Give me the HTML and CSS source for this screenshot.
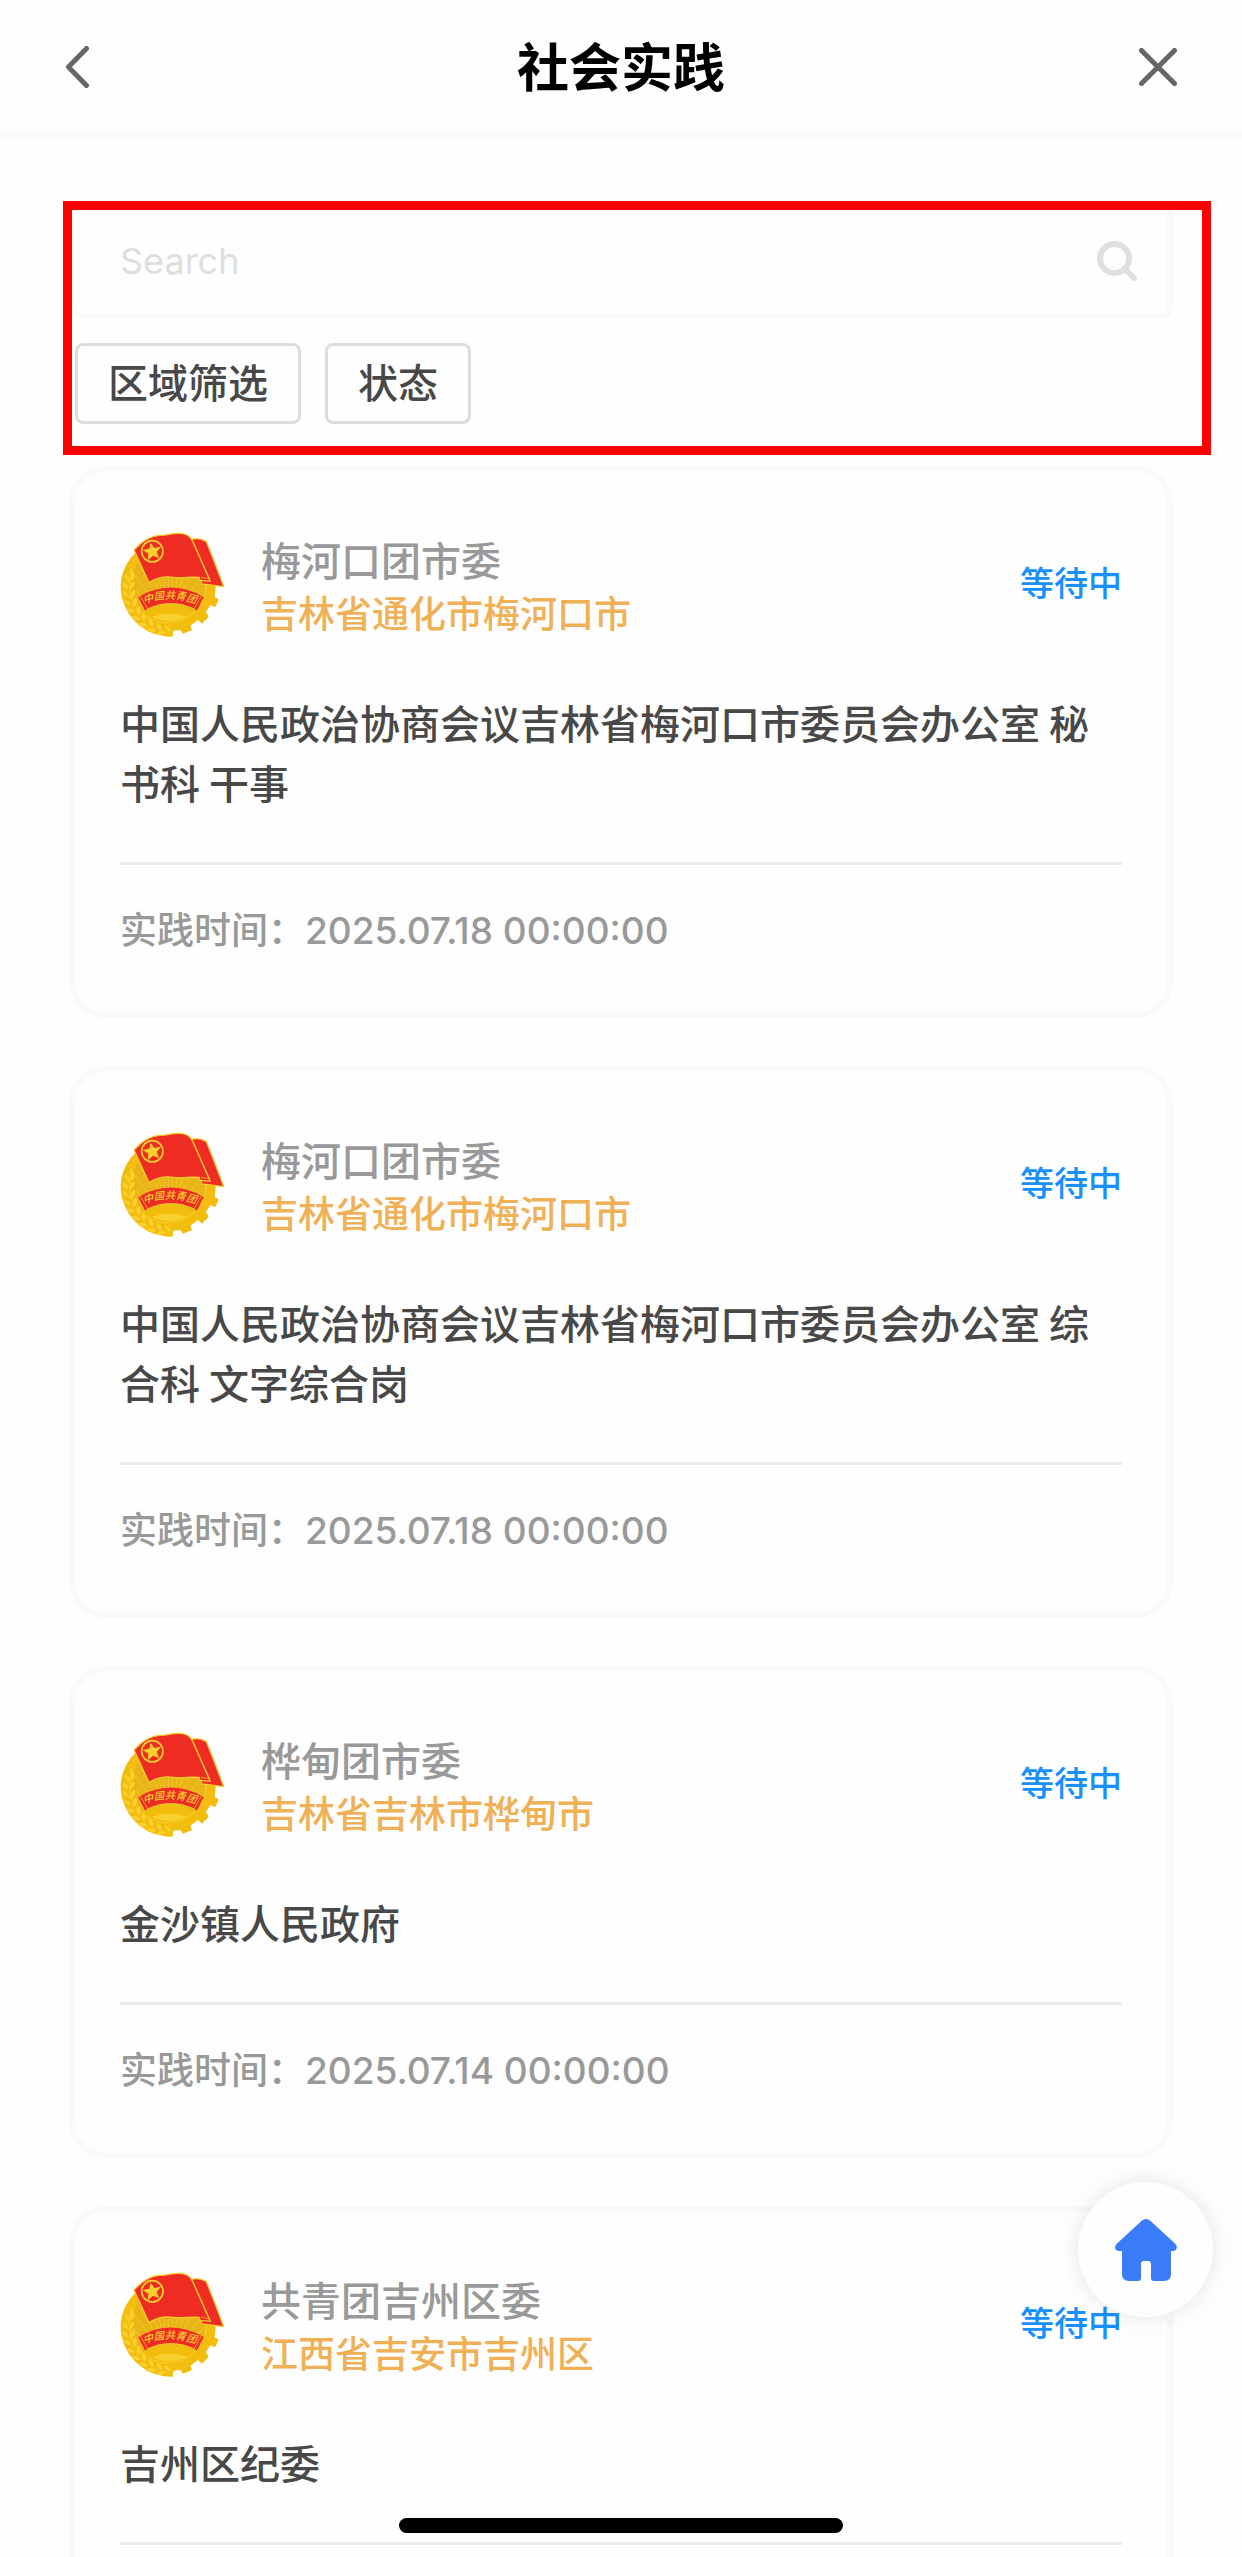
FILE: index.html
```html
<!DOCTYPE html>
<html lang="zh-CN">
<head>
  <meta charset="UTF-8" />
  <meta name="viewport" content="width=device-width, initial-scale=1.0"/>
  <title>社会实践</title>
  <link rel="stylesheet" href="styles.css">
</head>
<body>
  <!-- Header -->
  <header class="topbar">
    <button class="icon-btn" type="button" aria-label="返回">
      <svg width="24" height="42" viewBox="0 0 24 42"><path d="M21.500 2.500L3.500 21L21.500 39.500"/></svg>
    </button>
    <h1>社会实践</h1>
    <button class="icon-btn" type="button" aria-label="关闭">
      <svg width="38" height="38" viewBox="0 0 38 38"><path d="M2.500 2.500L35.500 35.500M35.500 2.500L2.500 35.500"/></svg>
    </button>
  </header>

  <main class="content">
    <!-- Search and filters -->
    <section class="filter-panel">
      <form class="search-box">
        <input type="text" placeholder="Search" aria-label="Search">
        <button class="search-btn" type="submit" aria-label="搜索">
          <svg width="40" height="40" viewBox="0 0 40 40"><circle cx="17.500" cy="17.500" r="14.500"/><path d="M29 29L37 37"/></svg>
        </button>
      </form>
      <div class="filters">
        <button type="button">区域筛选</button>
        <button type="button">状态</button>
      </div>
    </section>

    <!-- Job list -->
    <section class="list">
      <article class="card">
        <div class="card-head">
          <!-- The emblem is drawn once here, the other cards reuse it -->
          <svg class="avatar" viewBox="60 66 315 315" role="img" aria-label="团徽">
            <g id="emblem">
              <!-- gear -->
              <path fill="#f2bd0c" d="M204 88A144 144 0 0 0 62 228A152 152 0 0 0 218 380L220 362L242 360L248 371L276 360L271 347L294 330L306 341L326 320L318 306L331 286L346 291L356 268L344 262L347 232Z"/>
              <circle cx="205" cy="225" r="113" fill="#e8b416"/>
              <path stroke="#f6cc3a" stroke-width="2" d="M205 330L98 190M205 330L92 230M205 330L118 160M205 330L138 140M205 330L160 130M205 330L182 120M205 330L205 120M205 330L228 120M205 330L250 130M205 330L272 140M205 330L292 160M205 330L312 190M205 330L318 230"/>
              <path fill="#f2bd0c" d="M142 303Q210 266 280 303L294 305Q265 338 205 338Q145 338 116 305Z"/>
              <path fill="#fad02f" d="M156 321Q210 302 262 321Q210 346 156 321Z"/>
              <path fill="none" stroke="#fad02f" stroke-width="3" d="M98 178A116 116 0 0 0 205 339A116 116 0 0 0 319 225"/>
              <!-- wheat -->
              <g fill="#fad02f">
                <path d="M92 174q12 10 8 28q-16 -8 -8 -28zM76 192q14 8 13 24q-17 -6 -13 -24zM104 188q2 16 -12 26q-4 -16 12 -26z"/>
                <path d="M69 216q16 6 17 22q-18 -4 -17 -22zM103 212q3 18 -13 28q-6 -18 13 -28z"/>
                <path d="M66 242q18 4 21 20q-19 -2 -21 -20zM104 238q5 17 -11 29q-8 -18 11 -29z"/>
                <path d="M70 268q18 2 24 18q-20 0 -24 -18zM108 262q8 17 -6 30q-11 -16 6 -30z"/>
                <path d="M78 294q19 -1 28 14q-21 3 -28 -14zM117 286q10 14 -1 30q-14 -14 1 -30z"/>
                <path d="M92 319q19 -5 31 9q-21 7 -31 -9zM130 306q13 13 5 29q-17 -11 -5 -29z"/>
                <path d="M112 342q18 -9 32 3q-18 12 -32 -3zM149 324q15 11 9 27q-18 -8 -9 -27z"/>
                <path d="M136 360q17 -12 34 -1q-17 15 -34 1zM172 338q16 9 13 23q-19 -5 -13 -23z"/>
                <path d="M168 371q15 -13 30 -4q-12 14 -30 4zM193 346q17 4 20 18q-18 0 -20 -18z"/>
              </g>
              <!-- flag -->
              <path fill="#ee2c24" stroke="#f7ca2e" stroke-width="4" stroke-linejoin="round" d="M276 88Q298 82 318 94Q330 120 371 230L306 222L298 200Z"/>
              <path fill="#ee2c24" stroke="#f7ca2e" stroke-width="4" stroke-linejoin="round" d="M102 120Q140 78 178 76C204 78 228 62 258 74Q270 78 278 94L331 214L300 211L297 202C266 200 244 206 220 202Q180 196 147 218Z"/>
              <path fill="none" stroke="#f7ca2e" stroke-width="2" d="M278 94L327 206L303 202"/>
              <circle cx="157" cy="124" r="32" fill="none" stroke="#fad02f" stroke-width="5"/>
              <path fill="#fad02f" d="M152 98L163 114L183 110L170 126L178 145L159 137L143 151L145 131L128 120L148 116Z"/>
              <!-- ribbon -->
              <path fill="#ee2c24" stroke="#fad02f" stroke-width="2" d="M113 261Q210 202 313 260L291 304L282 296Q212 264 143 296L135 304Z"/>
              <path fill="none" stroke="#fad02f" stroke-width="2" d="M121 258L143 296M304 258L282 296"/>
              <g class="emblem-text">
                <text transform="translate(147 277) rotate(-14)">中</text>
                <text transform="translate(178 269) rotate(-7)">国</text>
                <text transform="translate(210 266)">共</text>
                <text transform="translate(241 269) rotate(7)">青</text>
                <text transform="translate(272 277) rotate(14)">团</text>
              </g>
            </g>
          </svg>
          <div class="org">
            <p class="org-name">梅河口团市委</p>
            <p class="org-area">吉林省通化市梅河口市</p>
          </div>
          <span class="status">等待中</span>
        </div>
        <h2>中国人民政治协商会议吉林省梅河口市委员会办公室 秘书科 干事</h2>
        <p class="time">实践时间：2025.07.18 00:00:00</p>
      </article>

      <article class="card">
        <div class="card-head">
          <svg class="avatar" viewBox="60 66 315 315" role="img" aria-label="团徽"><use href="#emblem"/></svg>
          <div class="org">
            <p class="org-name">梅河口团市委</p>
            <p class="org-area">吉林省通化市梅河口市</p>
          </div>
          <span class="status">等待中</span>
        </div>
        <h2>中国人民政治协商会议吉林省梅河口市委员会办公室 综合科 文字综合岗</h2>
        <p class="time">实践时间：2025.07.18 00:00:00</p>
      </article>

      <article class="card">
        <div class="card-head">
          <svg class="avatar" viewBox="60 66 315 315" role="img" aria-label="团徽"><use href="#emblem"/></svg>
          <div class="org">
            <p class="org-name">桦甸团市委</p>
            <p class="org-area">吉林省吉林市桦甸市</p>
          </div>
          <span class="status">等待中</span>
        </div>
        <h2>金沙镇人民政府</h2>
        <p class="time">实践时间：2025.07.14 00:00:00</p>
      </article>

      <article class="card">
        <div class="card-head">
          <svg class="avatar" viewBox="60 66 315 315" role="img" aria-label="团徽"><use href="#emblem"/></svg>
          <div class="org">
            <p class="org-name">共青团吉州区委</p>
            <p class="org-area">江西省吉安市吉州区</p>
          </div>
          <span class="status">等待中</span>
        </div>
        <h2>吉州区纪委</h2>
      </article>
    </section>
  </main>

  <!-- Floating home button -->
  <a class="home-btn" href="/" aria-label="首页">
    <svg width="62" height="62" viewBox="0 0 62 62"><path d="M27 1.500Q31 -1.500 35 1.500L60 24.500Q63 28 61 30.500Q60 32 56 32V55Q56 62 49 62H39Q36 62 36 59V45Q36 42 33 42H29Q26 42 26 45V59Q26 62 23 62H14Q7 62 7 55V32H4Q1 32 0 29Q0 26 2 24.500Z"/></svg>
  </a>
  <div class="home-indicator"></div>
</body>
</html>
```
FILE: styles.css
```css
* {
  box-sizing: border-box;
  margin: 0;
  padding: 0;
}

body {
  font-family: Inter, "Noto Sans CJK SC", sans-serif;
  background-color: #fefefe;
  color: #484848;
  height: 100vh;
  display: flex;
  flex-direction: column;
  overflow: hidden;
}

button {
  font-family: inherit;
  background: none;
  border: none;
  cursor: pointer;
}

/* Header */
.topbar {
  display: flex;
  justify-content: space-between;
  align-items: center;
  flex-shrink: 0;
  height: 137px;
  padding: 0 65px;
  border-bottom: 4px solid #f8f8f8;
}

.topbar h1 {
  padding-top: 4px;
  font-size: 52px;
  font-weight: 700;
  line-height: 60px;
  color: #000;
}

.icon-btn {
  display: flex;
  width: 38px;
}

.icon-btn svg {
  fill: none;
  stroke: #666;
  stroke-width: 5;
  stroke-linecap: round;
  stroke-linejoin: round;
}

.content {
  flex: 1;
  min-height: 0;
  padding-top: 64px;
  overflow-y: auto;
  scrollbar-width: none;
}

/* Search and filters */
.filter-panel {
  margin: 0 31px 17px 63px;
  padding: 0 35px 22px 3px;
  border: 9px solid #fe0000;
  overflow: hidden;
}

.search-box {
  display: flex;
  align-items: center;
  height: 103px;
  padding: 0 30px 2px 45px;
  border-radius: 0 0 6px 6px;
  box-shadow: 0 0 0 6px #f9f9f9;
}

.search-box input {
  flex: 1;
  min-width: 0;
  height: 60px;
  font-family: inherit;
  font-size: 36px;
  color: #484848;
  background: none;
  border: none;
  outline: none;
}

.search-box input::placeholder {
  color: #dedede;
}

.search-btn {
  display: flex;
}

.search-btn svg {
  fill: none;
  stroke: #dfdfdf;
  stroke-width: 6;
  stroke-linecap: round;
}

.filters {
  display: flex;
  gap: 24px;
  margin-top: 30px;
}

.filters button {
  height: 81px;
  padding: 0 30px;
  border: 3px solid #ddd;
  border-radius: 8px;
  font-size: 40px;
  font-weight: 500;
  line-height: 60px;
  color: #484848;
}

/* Cards */
.list {
  display: flex;
  flex-direction: column;
  gap: 60px;
  padding: 0 75px 60px;
}

.card {
  padding: 60px 45px 54px;
  border-radius: 30px;
  background-color: #fefefe;
  box-shadow: 0 0 0 6px #f9f9f9;
}

.card-head {
  display: flex;
  align-items: center;
  height: 105px;
}

.avatar {
  width: 105px;
  height: 105px;
  margin-right: 36px;
}

.emblem-text {
  font-family: "Noto Sans CJK SC", sans-serif;
  font-size: 31px;
  font-style: italic;
  font-weight: 500;
  text-anchor: middle;
  fill: #fad02f;
}

.org {
  flex: 1;
  padding-top: 6px;
  font-weight: 500;
  line-height: 53px;
}

.org-name {
  font-size: 40px;
  color: #999;
}

.org-area {
  font-size: 37px;
  color: #f0b056;
}

.status {
  padding-bottom: 6px;
  font-size: 34px;
  font-weight: 500;
  color: #1890ff;
}

.card h2 {
  margin-top: 55px;
  padding-bottom: 50px;
  border-bottom: 3px solid #ececec;
  font-family: "Noto Sans CJK SC", sans-serif;
  font-size: 40px;
  font-weight: 500;
  line-height: 60px;
}

.time {
  padding-top: 39px;
  font-size: 37px;
  font-weight: 500;
  line-height: 54px;
  color: #999;
}

/* Overlays */
.home-btn {
  position: fixed;
  right: 29px;
  bottom: 240px;
  width: 135px;
  height: 135px;
  display: flex;
  justify-content: center;
  align-items: center;
  border-radius: 50%;
  background-color: #fefefe;
  box-shadow: 0 0 24px rgba(0, 0, 0, 0.1);
}

.home-btn svg {
  fill: #3b7cf9;
}

.home-indicator {
  position: fixed;
  left: 50%;
  bottom: 24px;
  width: 444px;
  height: 15px;
  margin-left: -222px;
  border-radius: 8px;
  background-color: #000;
}
```
